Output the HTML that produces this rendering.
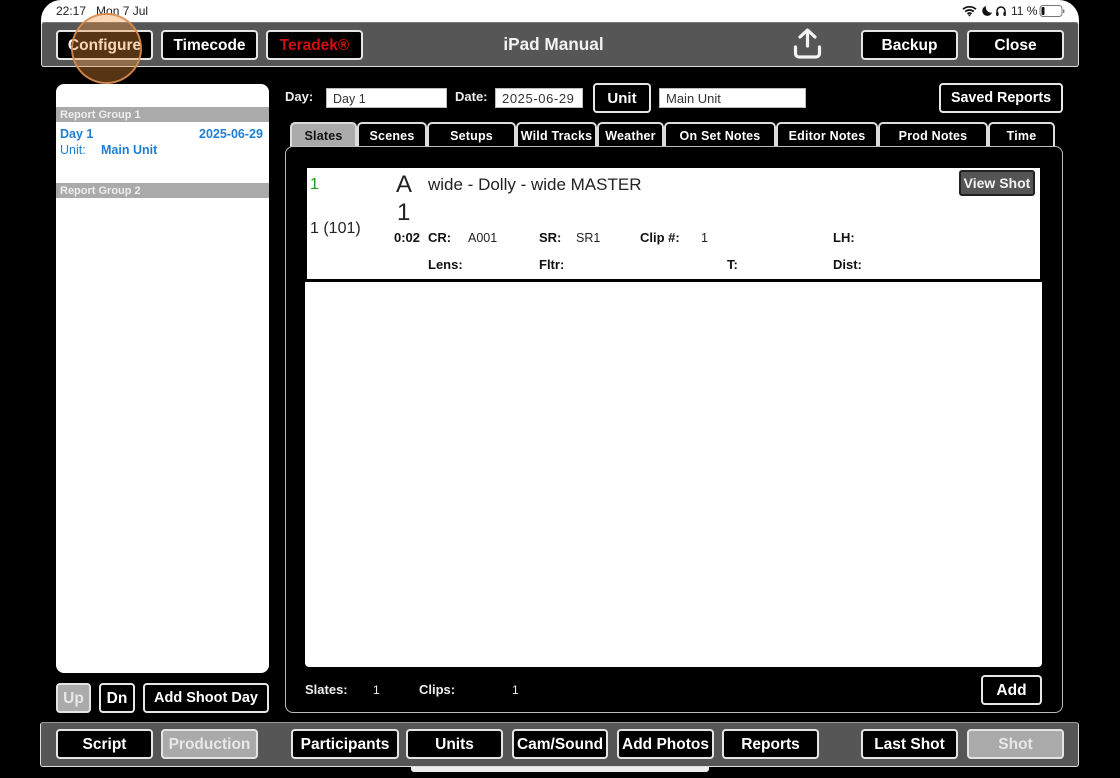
<!DOCTYPE html>
<html><head><meta charset="utf-8"><style>
*{box-sizing:border-box}
html,body{margin:0;padding:0;background:#000;width:1120px;height:778px;overflow:hidden}
body{position:relative;font-family:"Liberation Sans",sans-serif;color:#fff}
#p{position:absolute;left:0;top:0;width:1120px;height:778px;filter:blur(.35px)}
#p div{position:absolute;white-space:nowrap}
.b{background:#000;border:2px solid #e6e6e6;border-radius:4px;text-align:center;font-weight:700;font-size:15.5px;line-height:27px;height:30px}
.g{background:#aaa}
.tab{top:122px;height:25px;background:#000;border:2px solid #dcdcdc;border-bottom:0;border-radius:5px 5px 0 0;text-align:center;font-weight:700;font-size:12.5px;letter-spacing:.2px;line-height:24px}
.in{background:#fff;border:1px solid #bbb;color:#333;font-size:13px;height:20px;line-height:20px;padding-left:6px;top:88px}
.k{color:#111;font-weight:700;font-size:13px;line-height:16px}
.v{color:#222;font-size:13px;line-height:16px}
.l{color:#eee;font-weight:700;font-size:13px;line-height:16px}
.bl{color:#1b7fd6;font-size:12.5px;line-height:16px}
</style></head><body><div id="p">
<div style="left:41px;top:0;width:1038px;height:30px;background:#fff;border-radius:20px 20px 0 0"></div>
<div style="left:56px;top:4px;font-size:12px;line-height:15px;color:#222">22:17&nbsp;&nbsp;&nbsp;Mon 7 Jul</div>
<svg style="position:absolute;left:962px;top:4px" width="104" height="14" viewBox="0 0 104 14">
<path d="M1 5.200a10 10 0 0 1 13 0M3.200 7.600a6.600 6.600 0 0 1 8.600 0M5.400 9.800a3.400 3.400 0 0 1 4.200 0" fill="none" stroke="#111" stroke-width="1.700"/><path d="M5.800 10.500 7.500 12.600 9.200 10.500z" fill="#111"/>
<path d="M24 2a5 5 0 1 0 6 6.500A5.200 5.200 0 0 1 24 2z" fill="#111"/>
<path d="M35 11V7a4 4 0 0 1 8 0v4" fill="none" stroke="#111" stroke-width="1.500"/><rect x="34.200" y="8" width="2.400" height="4" rx="1" fill="#111"/><rect x="41.400" y="8" width="2.400" height="4" rx="1" fill="#111"/>
<rect x="78" y="1.500" width="22" height="11" rx="3" fill="none" stroke="#777"/><rect x="79.500" y="3" width="3" height="8" rx="1" fill="#111"/><rect x="101" y="5.500" width="1.400" height="3.500" fill="#777"/>
</svg>
<div style="left:1011px;top:4px;font-size:12px;line-height:15px;color:#222">11 %</div>

<div style="left:41px;top:22px;width:1038px;height:45px;background:#565656;border:1px solid #ddd;border-top-color:#777;border-radius:3px"></div>
<div class="b" style="left:56px;top:30px;width:97px">Configure</div>
<div class="b" style="left:161px;top:30px;width:97px">Timecode</div>
<div class="b" style="left:266px;top:30px;width:97px;color:#d20f0f">Teradek®</div>
<div style="left:453px;top:34px;width:201px;text-align:center;font-size:17.2px;line-height:20px;font-weight:700;color:#f2f2f2">iPad Manual</div>
<svg style="position:absolute;left:792px;top:27px" width="32" height="34" viewBox="0 0 32 34"><path d="M15.500 19V3.500M8 10 15.500 3 23 10M3.500 20v6.500A3.500 3.500 0 0 0 7 30h17a3.500 3.500 0 0 0 3.500-3.500V20" fill="none" stroke="#f4f4f4" stroke-width="3.200" stroke-linecap="round" stroke-linejoin="round"/></svg>
<div class="b" style="left:861px;top:30px;width:97px">Backup</div>
<div class="b" style="left:967px;top:30px;width:97px">Close</div>
<div style="left:71px;top:13px;width:71px;height:71px;border-radius:50%;background:rgba(238,143,55,.36);border:2.500px solid rgba(215,140,80,.9)"></div>

<div style="left:56px;top:84px;width:213px;height:589px;background:#fff;border-radius:8px"></div>
<div style="left:56px;top:107px;width:213px;height:15px;background:#aaa;font-size:11px;font-weight:700;line-height:16px;padding-left:4px;color:#eee">Report Group 1</div>
<div class="bl" style="left:60px;top:126px;font-weight:700">Day 1</div>
<div class="bl" style="left:199px;top:126px;font-weight:700">2025-06-29</div>
<div class="bl" style="left:60px;top:142px">Unit:</div>
<div class="bl" style="left:101px;top:142px;font-weight:700">Main Unit</div>
<div style="left:56px;top:183px;width:213px;height:15px;background:#aaa;font-size:11px;font-weight:700;line-height:16px;padding-left:4px;color:#eee">Report Group 2</div>

<div class="b g" style="left:56px;top:683px;width:35px;color:#e8e8e8;border-color:#e4e4e4">Up</div>
<div class="b" style="left:99px;top:683px;width:36px">Dn</div>
<div class="b" style="left:143px;top:683px;width:126px;font-size:14.500px">Add Shoot Day</div>

<div class="l" style="left:285px;top:89px">Day:</div>
<div class="in" style="left:326px;width:121px;font-size:12.500px">Day 1</div>
<div class="l" style="left:455px;top:89px">Date:</div>
<div class="in" style="left:495px;width:88px;letter-spacing:.6px">2025-06-29</div>
<div class="b" style="left:593px;top:83px;width:58px;font-size:15px">Unit</div>
<div class="in" style="left:659px;width:147px">Main Unit</div>
<div class="b" style="left:939px;top:83px;width:124px;font-size:14.300px">Saved Reports</div>

<div class="tab" style="left:290px;width:67px;background:#aaa;color:#111">Slates</div>
<div class="tab" style="left:357px;width:70px">Scenes</div>
<div class="tab" style="left:427px;width:89px">Setups</div>
<div class="tab" style="left:516px;width:81px">Wild Tracks</div>
<div class="tab" style="left:597px;width:67px">Weather</div>
<div class="tab" style="left:664px;width:112px">On Set Notes</div>
<div class="tab" style="left:776px;width:102px">Editor Notes</div>
<div class="tab" style="left:878px;width:110px">Prod Notes</div>
<div class="tab" style="left:988px;width:67px">Time</div>

<div style="left:285px;top:146px;width:778px;height:567px;border:1px solid #bbb;border-radius:8px"></div>
<div style="left:307px;top:168px;width:733px;height:111px;background:#fff"></div>
<div style="left:305px;top:282px;width:737px;height:385px;background:#fff;border-radius:0 0 4px 4px"></div>

<div style="left:310px;top:175px;font-size:16px;line-height:19px;color:#1a9a1a">1</div>
<div style="left:396px;top:171px;font-size:24px;line-height:27px;color:#222">A</div>
<div style="left:428px;top:175px;font-size:17px;line-height:19px;color:#222">wide - Dolly - wide MASTER</div>
<div style="left:397px;top:199px;font-size:24px;line-height:27px;color:#222">1</div>
<div style="left:310px;top:219px;font-size:16px;line-height:19px;color:#222">1 (101)</div>
<div class="b" style="left:959px;top:170px;width:76px;height:26px;background:#555;border:2px solid #222;color:#f2f2f2;font-size:14px;line-height:23px;border-radius:3px">View Shot</div>
<div class="k" style="left:394px;top:230px">0:02</div>
<div class="k" style="left:428px;top:230px">CR:</div>
<div class="v" style="left:468px;top:230px;font-size:12.500px">A001</div>
<div class="k" style="left:539px;top:230px">SR:</div>
<div class="v" style="left:576px;top:230px;font-size:12.500px">SR1</div>
<div class="k" style="left:640px;top:230px">Clip #:</div>
<div class="v" style="left:701px;top:230px;font-size:12.500px">1</div>
<div class="k" style="left:833px;top:230px">LH:</div>
<div class="k" style="left:428px;top:257px">Lens:</div>
<div class="k" style="left:539px;top:257px">Fltr:</div>
<div class="k" style="left:727px;top:257px">T:</div>
<div class="k" style="left:833px;top:257px">Dist:</div>

<div class="l" style="left:305px;top:682px">Slates:</div>
<div class="v" style="left:373px;top:682px;color:#eee;font-size:12px">1</div>
<div class="l" style="left:419px;top:682px">Clips:</div>
<div class="v" style="left:512px;top:682px;color:#eee;font-size:12px">1</div>
<div class="b" style="left:981px;top:675px;width:61px">Add</div>

<div style="left:411px;top:766px;width:298px;height:6px;background:#ececec;border-radius:0 0 3px 3px"></div>
<div style="left:40px;top:722px;width:1039px;height:45px;background:#565656;border:1px solid #ddd;border-top-color:#999;border-radius:3px"></div>
<div class="b" style="left:56px;top:729px;width:97px">Script</div>
<div class="b g" style="left:161px;top:729px;width:97px;color:#e8e8e8;border-color:#e4e4e4">Production</div>
<div class="b" style="left:291px;top:729px;width:108px">Participants</div>
<div class="b" style="left:406px;top:729px;width:97px">Units</div>
<div class="b" style="left:512px;top:729px;width:96px">Cam/Sound</div>
<div class="b" style="left:617px;top:729px;width:97px">Add Photos</div>
<div class="b" style="left:722px;top:729px;width:97px">Reports</div>
<div class="b" style="left:861px;top:729px;width:97px">Last Shot</div>
<div class="b g" style="left:967px;top:729px;width:97px;color:#e8e8e8;border-color:#e4e4e4">Shot</div>
</div></body></html>
